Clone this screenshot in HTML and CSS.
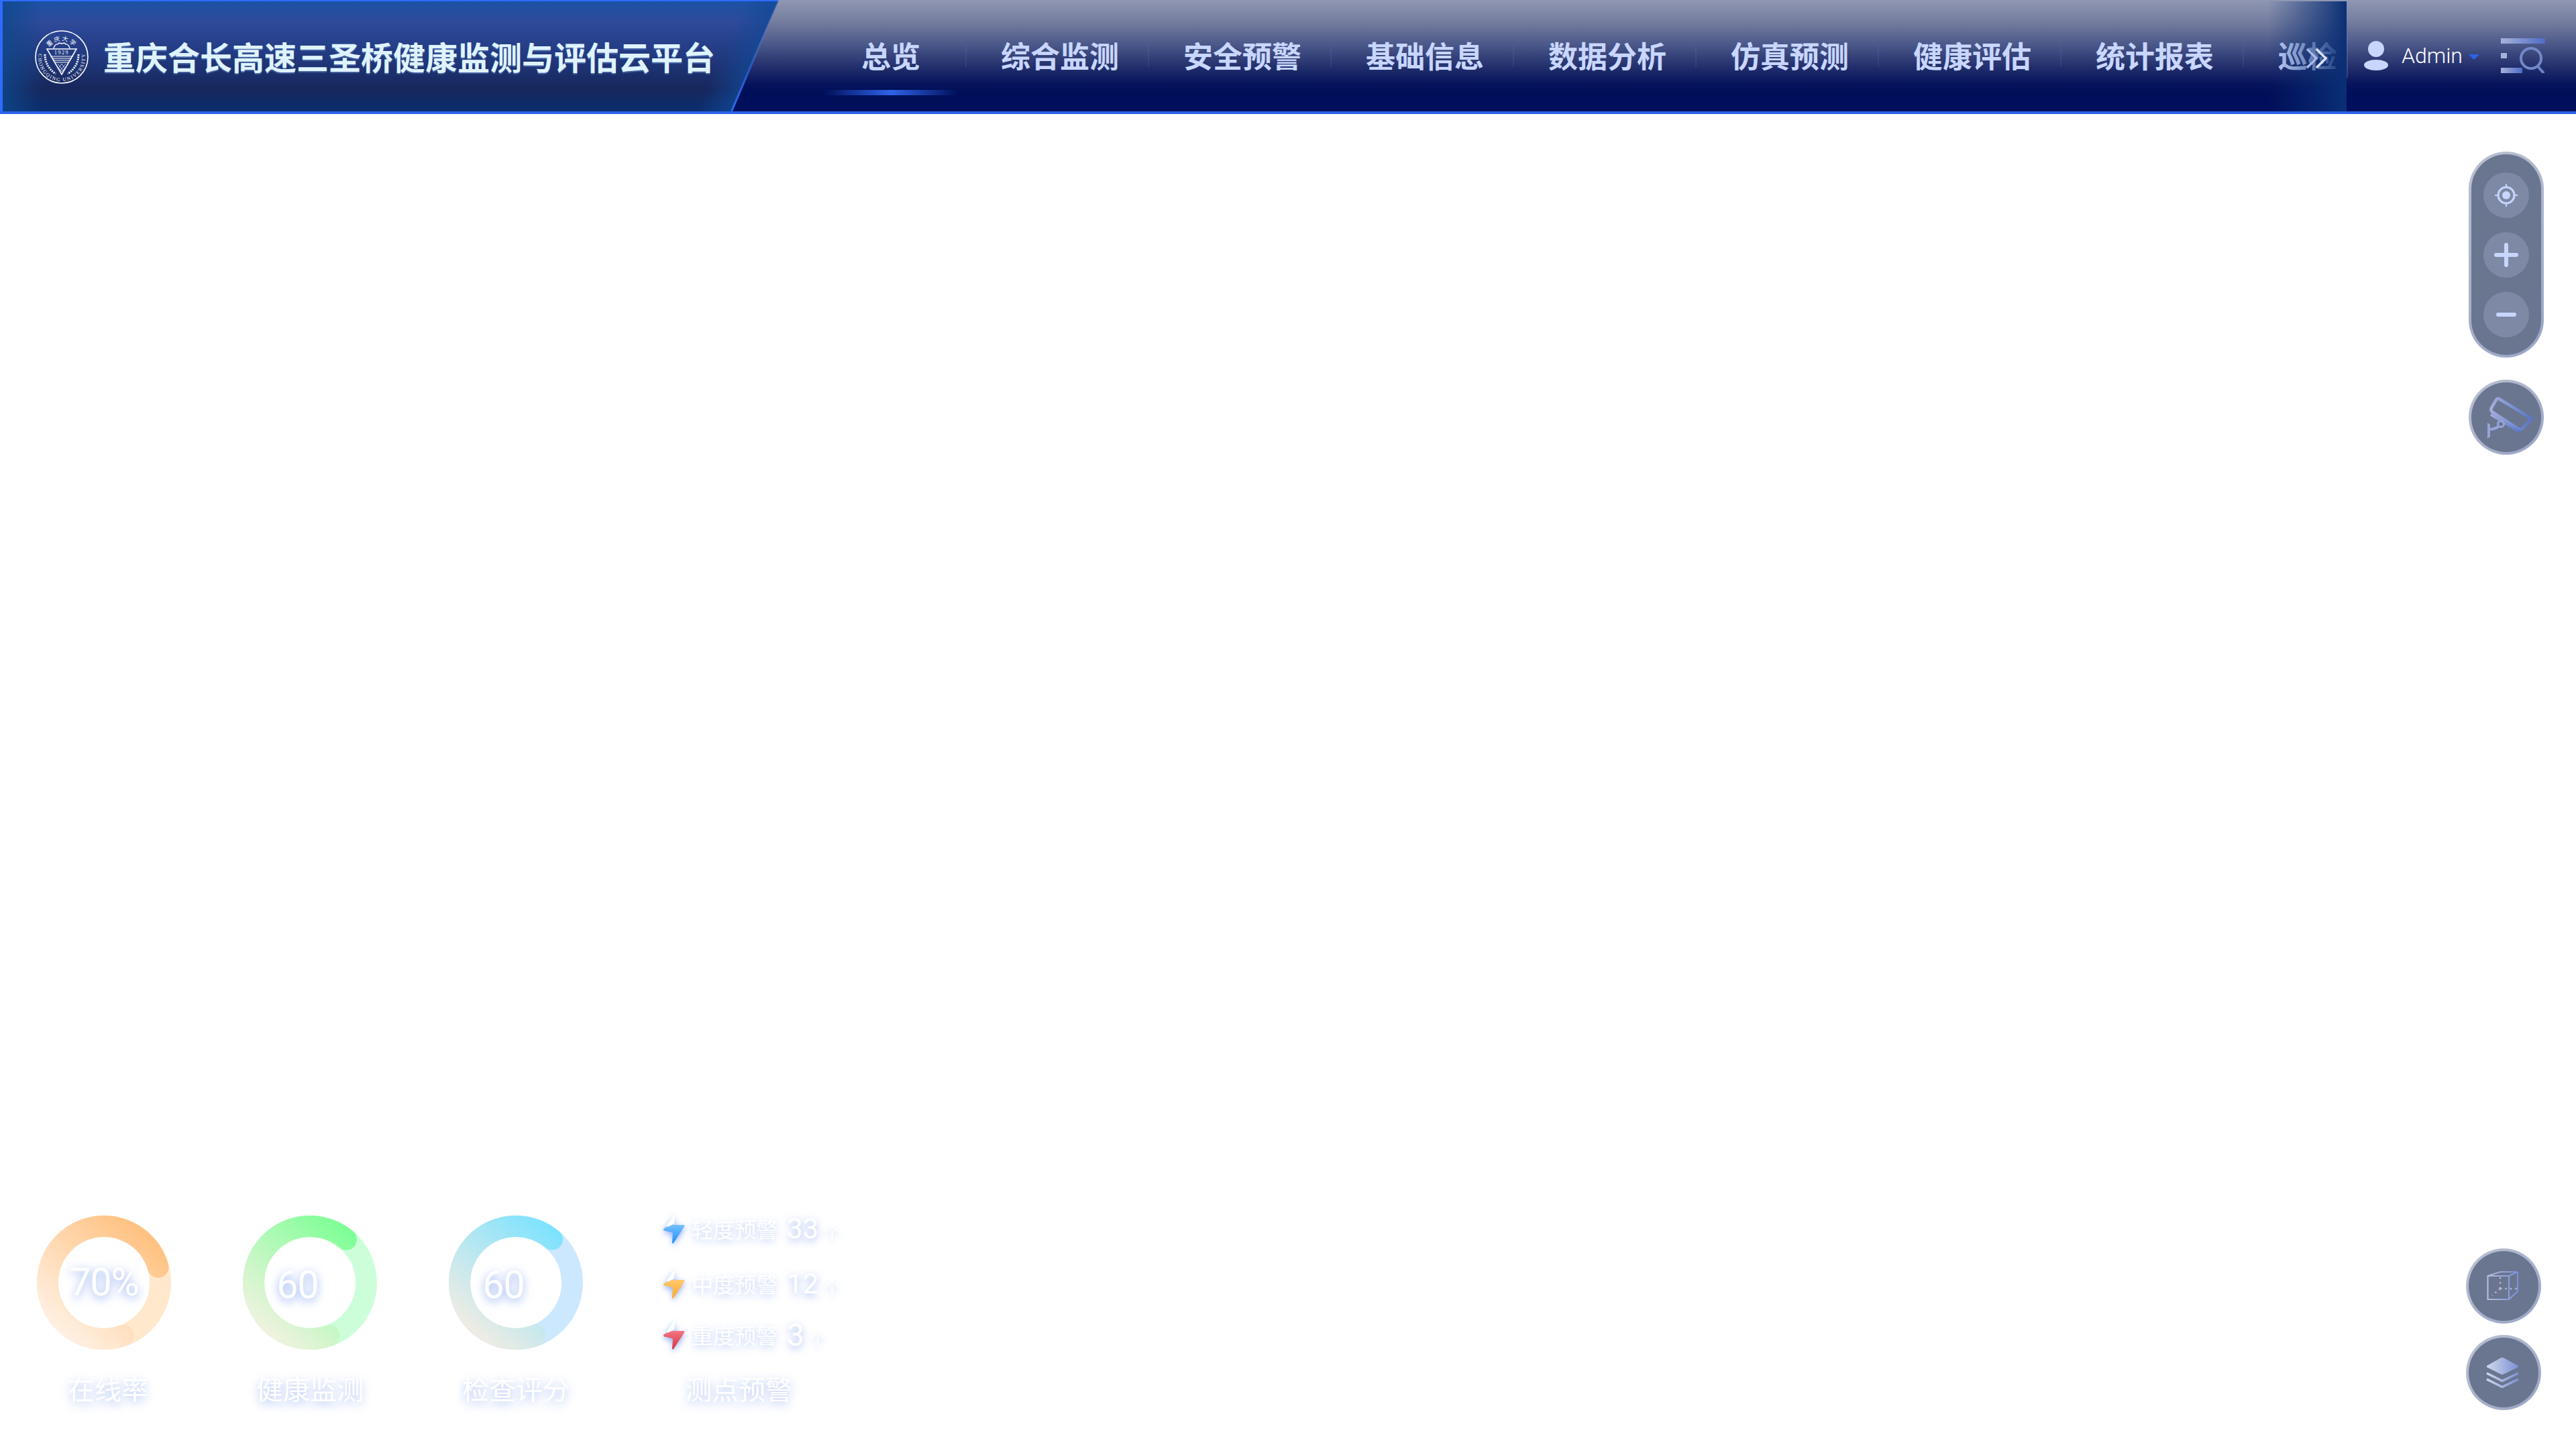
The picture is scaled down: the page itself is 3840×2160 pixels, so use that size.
FILE: index.html
```html
<!DOCTYPE html>
<html lang="zh-CN">
<head>
    <meta charset="UTF-8">
    <meta name="viewport" content="width=device-width, initial-scale=1.0">
    <title>重庆合长高速三圣桥健康监测与评估云平台</title>
    <link rel="stylesheet" href="styles.css">
</head>
<body>

    <!-- 顶部导航 -->
    <header class="header">
        <div class="title">
            <svg class="seal" viewBox="0 0 80 80" width="80" height="80">
                <defs>
                    <path id="sealTop" d="M16 40 A24 24 0 0 1 64 40"></path>
                    <path id="sealBottom" d="M6 33 A35 35 0 1 0 74 33"></path>
                </defs>
                <circle cx="40" cy="40" r="39" fill="none" stroke="#fff" stroke-width="1.6"></circle>
                <text class="seal-cn"><textPath href="#sealTop" startOffset="50%" text-anchor="middle">重庆大学</textPath></text>
                <text class="seal-en"><textPath href="#sealBottom" startOffset="50%" text-anchor="middle" textLength="122">CHONGQING UNIVERSITY</textPath></text>
                <path d="M28 27 Q30 20 34 21 L36 19 L40 20 L44 19 L46 21 Q50 20 52 27" fill="none" stroke="#fff" stroke-width="1.4"></path>
                <path d="M18 28 H62 L40 66 Z" fill="none" stroke="#fff" stroke-width="1.6"></path>
                <text class="seal-year" x="40" y="36" text-anchor="middle">1929</text>
                <path d="M23 39 H57 M25 42 H55 M27 45 H53 M29 48 H51" stroke="#fff" stroke-width="1"></path>
                <path d="M30 50 L40 62 L50 50 M34 50 L42 60 M46 50 L38 60 M40 50 L36 56 M40 50 L44 56" fill="none" stroke="#dfe8ff" stroke-width=".8"></path>
                <path d="M15 36 Q15 54 31 65" fill="none" stroke="#fff" stroke-width="3" stroke-dasharray="2 1.4"></path>
                <path d="M65 36 Q65 54 49 65" fill="none" stroke="#fff" stroke-width="3" stroke-dasharray="2 1.4"></path>
            </svg>
            <h1 class="title-text">重庆合长高速三圣桥健康监测与评估云平台</h1>
        </div>
        <svg class="title-edge" viewBox="0 0 80 166" width="80" height="166">
            <defs>
                <linearGradient id="edgeLine" x1="0" y1="0" x2="0" y2="1">
                    <stop offset="0" stop-color="#8d96b2" stop-opacity=".2"></stop>
                    <stop offset=".6" stop-color="#2a57c0"></stop>
                    <stop offset="1" stop-color="#2f66f0"></stop>
                </linearGradient>
            </defs>
            <line x1="72" y1="0" x2="1.5" y2="166" stroke="url(#edgeLine)" stroke-width="3"></line>
        </svg>

        <nav class="nav">
            <a class="nav-item active">总览</a>
            <a class="nav-item">综合监测</a>
            <a class="nav-item">安全预警</a>
            <a class="nav-item">基础信息</a>
            <a class="nav-item">数据分析</a>
            <a class="nav-item">仿真预测</a>
            <a class="nav-item">健康评估</a>
            <a class="nav-item">统计报表</a>
            <a class="nav-item">巡检</a>
            <span class="nav-fade"></span>
            <svg class="nav-more" viewBox="0 0 36 32" width="36" height="32">
                <path d="M6 2 L20 16 L6 30" fill="none" stroke="#a9b8e6" stroke-width="3.4"></path>
                <path d="M20 2 L34 16 L20 30" fill="none" stroke="#dbe2f6" stroke-width="3.4"></path>
            </svg>
        </nav>

        <div class="header-right">
            <svg class="user-icon" viewBox="0 0 36 44" width="36" height="44">
                <ellipse cx="18" cy="12" rx="12" ry="12" fill="#c8d6ff"></ellipse>
                <ellipse cx="18" cy="36" rx="18" ry="8" fill="#c8d6ff"></ellipse>
            </svg>
            <span class="user-name">Admin</span>
            <span class="user-arrow"></span>
            <svg class="search-icon" viewBox="0 0 66 52" width="66" height="52">
                <defs>
                    <linearGradient id="searchFill" x1="0" y1="0" x2="1" y2="0">
                        <stop offset="0" stop-color="#a6b2da"></stop>
                        <stop offset="1" stop-color="#4f6bc4"></stop>
                    </linearGradient>
                </defs>
                <rect x="0" y="0" width="66" height="8" fill="url(#searchFill)"></rect>
                <rect x="0" y="22" width="9" height="8" fill="#a6b2da"></rect>
                <rect x="0" y="44" width="32" height="8" fill="url(#searchFill)"></rect>
                <circle cx="45" cy="30" r="15" fill="none" stroke="#7488c8" stroke-width="4"></circle>
                <line x1="55" y1="42" x2="64" y2="52" stroke="#6f84c8" stroke-width="4"></line>
            </svg>
        </div>
    </header>

    <!-- 地图区域 -->
    <main class="map">

        <div class="map-tools">
            <div class="zoom-pill">
                <button class="zoom-btn">
                    <svg viewBox="0 0 36 36" width="36" height="36">
                        <circle cx="18" cy="18" r="12" fill="none" stroke="#c8d6ff" stroke-width="3"></circle>
                        <circle cx="18" cy="18" r="6" fill="#c8d6ff"></circle>
                        <path d="M18 1 V6 M18 30 V35 M1 18 H6 M30 18 H35" stroke="#c8d6ff" stroke-width="2"></path>
                    </svg>
                </button>
                <button class="zoom-btn">
                    <svg viewBox="0 0 36 36" width="36" height="36">
                        <path d="M3 18 H33 M18 3 V33" stroke="#c8d6ff" stroke-width="6" stroke-linecap="round"></path>
                    </svg>
                </button>
                <button class="zoom-btn">
                    <svg viewBox="0 0 36 36" width="36" height="36">
                        <path d="M6 18 H30" stroke="#c8d6ff" stroke-width="6" stroke-linecap="round"></path>
                    </svg>
                </button>
            </div>
            <button class="round-btn">
                <svg viewBox="4 4 104 104" width="104" height="104">
                    <defs>
                        <linearGradient id="camLine" x1="0" y1="0" x2="1" y2="0">
                            <stop offset="0" stop-color="#a3aeda"></stop>
                            <stop offset="1" stop-color="#5a76c8"></stop>
                        </linearGradient>
                    </defs>
                    <path d="M46 29 L94 58 L80 73 Q77 75 74 73 L35 48 Q32 45 34 42 L41 30 Q43 27 46 29 Z" fill="none" stroke="url(#camLine)" stroke-width="4.5"></path>
                    <path d="M33 52 L77 78" stroke="url(#camLine)" stroke-width="4" fill="none"></path>
                    <circle cx="48" cy="66" r="4.5" fill="none" stroke="#97a5d8" stroke-width="3"></circle>
                    <path d="M45 69 Q40 74 30 74" stroke="#97a5d8" stroke-width="4" fill="none"></path>
                    <path d="M28 64 L32 67 V85 L28 88 Z" fill="#97a5d8"></path>
                </svg>
            </button>
        </div>

        <div class="view-tools">
            <button class="round-btn">
                <svg viewBox="4 4 104 104" width="104" height="104">
                    <defs>
                        <linearGradient id="cubeLine" x1="0" y1="0" x2="1" y2="0">
                            <stop offset="0" stop-color="#b3bcdb"></stop>
                            <stop offset="1" stop-color="#7b91d4"></stop>
                        </linearGradient>
                    </defs>
                    <path d="M32.5 41 H64 V76 H32.5 Z M32.5 41 L51 35 H77 L64 41 M77 35 V64 L64 76" fill="none" stroke="url(#cubeLine)" stroke-width="2.2"></path>
                    <path d="M51 60 V38 M51 60 H76 M51 60 L39 70" fill="none" stroke="#b3bcdb" stroke-width="2.4" stroke-dasharray="2.4 5"></path>
                </svg>
            </button>
            <button class="round-btn">
                <svg viewBox="4 4 104 104" width="104" height="104">
                    <defs>
                        <linearGradient id="layerFill" x1="0" y1="0" x2="1" y2="0">
                            <stop offset="0" stop-color="#d0d6ea"></stop>
                            <stop offset="1" stop-color="#7d92d6"></stop>
                        </linearGradient>
                    </defs>
                    <path d="M31 46 L52 34 Q54 33 56 34 L78 46 L78 48 L56 58.500 Q54 59.500 52 58.500 L31 48 Z" fill="url(#layerFill)"></path>
                    <path d="M31 57 L54 68.500 L78 57 M31 66 L54 77.500 L78 66" fill="none" stroke="url(#layerFill)" stroke-width="3.600"></path>
                </svg>
            </button>
        </div>

        <!-- 左下角统计 -->
        <section class="stats">
            <div class="stat stat-online">
                <div class="donut">
                    <svg viewBox="0 0 200 200" width="200" height="200">
                        <defs>
                            <linearGradient id="arcOrange" gradientUnits="userSpaceOnUse" x1="170" y1="20" x2="30" y2="180">
                                <stop offset="0" stop-color="#ffbf7c"></stop>
                                <stop offset="1" stop-color="#fff2e6"></stop>
                            </linearGradient>
                        </defs>
                        <circle class="track" cx="100" cy="100" r="84" stroke="#ffe8cc"></circle>
                        <path class="arc" d="M128.700 178.900 A84 84 0 1 1 180.700 76.800" stroke="url(#arcOrange)"></path>
                    </svg>
                    <div class="donut-value">70%</div>
                </div>
                <div class="stat-label">在线率</div>
            </div>

            <div class="stat">
                <div class="donut">
                    <svg viewBox="0 0 200 200" width="200" height="200">
                        <defs>
                            <linearGradient id="arcGreen" gradientUnits="userSpaceOnUse" x1="170" y1="20" x2="30" y2="180">
                                <stop offset="0" stop-color="#78ff92"></stop>
                                <stop offset="1" stop-color="#f4f2e2"></stop>
                            </linearGradient>
                        </defs>
                        <circle class="track" cx="100" cy="100" r="84" stroke="#ccffd9"></circle>
                        <path class="arc" d="M128.700 178.900 A84 84 0 1 1 154 35.600" stroke="url(#arcGreen)"></path>
                    </svg>
                    <div class="donut-value donut-score">60<span class="donut-unit">分</span></div>
                </div>
                <div class="stat-label">健康监测</div>
            </div>

            <div class="stat">
                <div class="donut">
                    <svg viewBox="0 0 200 200" width="200" height="200">
                        <defs>
                            <linearGradient id="arcBlue" gradientUnits="userSpaceOnUse" x1="170" y1="20" x2="30" y2="180">
                                <stop offset="0" stop-color="#78e2ff"></stop>
                                <stop offset="1" stop-color="#f4ece2"></stop>
                            </linearGradient>
                        </defs>
                        <circle class="track" cx="100" cy="100" r="84" stroke="#cce8ff"></circle>
                        <path class="arc" d="M128.700 178.900 A84 84 0 1 1 154 35.600" stroke="url(#arcBlue)"></path>
                    </svg>
                    <div class="donut-value donut-score">60<span class="donut-unit">分</span></div>
                </div>
                <div class="stat-label">检查评分</div>
            </div>

            <div class="stat stat-alerts">
                <div class="alert-rows">
                    <div class="alert-row">
                        <svg class="bolt" viewBox="0 0 32 44" width="32" height="44">
                            <defs>
                                <linearGradient id="boltBlue" x1="0" y1="0" x2="0" y2="1">
                                    <stop offset="0" stop-color="#74c2ff"></stop>
                                    <stop offset="1" stop-color="#1c8cff"></stop>
                                </linearGradient>
                            </defs>
                            <path d="M1 21 L7 18 Q11 16 15 16 L30 16 Q32 16 31 18.500 L15 43 Q13 44.500 13 42 L14 29 Q14 27 12 26.700 L1 24.500 Q-1 23 1 21 Z" fill="url(#boltBlue)"></path>
                            <path d="M17 0 L4.500 17 Q5 19 7 18.400 L16 14 Z" fill="#fff"></path>
                        </svg>
                        <span class="alert-name">轻度预警</span>
                        <span class="alert-num">33</span>
                        <span class="alert-unit">个</span>
                    </div>
                    <div class="alert-row">
                        <svg class="bolt" viewBox="0 0 32 44" width="32" height="44">
                            <defs>
                                <linearGradient id="boltOrange" x1="0" y1="0" x2="0" y2="1">
                                    <stop offset="0" stop-color="#ffc86e"></stop>
                                    <stop offset="1" stop-color="#ffa726"></stop>
                                </linearGradient>
                            </defs>
                            <path d="M1 21 L7 18 Q11 16 15 16 L30 16 Q32 16 31 18.500 L15 43 Q13 44.500 13 42 L14 29 Q14 27 12 26.700 L1 24.500 Q-1 23 1 21 Z" fill="url(#boltOrange)"></path>
                            <path d="M17 0 L4.500 17 Q5 19 7 18.400 L16 14 Z" fill="#fff"></path>
                        </svg>
                        <span class="alert-name">中度预警</span>
                        <span class="alert-num">12</span>
                        <span class="alert-unit">个</span>
                    </div>
                    <div class="alert-row">
                        <svg class="bolt" viewBox="0 0 32 44" width="32" height="44">
                            <defs>
                                <linearGradient id="boltRed" x1="0" y1="0" x2="0" y2="1">
                                    <stop offset="0" stop-color="#f57682"></stop>
                                    <stop offset="1" stop-color="#d62f3c"></stop>
                                </linearGradient>
                            </defs>
                            <path d="M1 21 L7 18 Q11 16 15 16 L30 16 Q32 16 31 18.500 L15 43 Q13 44.500 13 42 L14 29 Q14 27 12 26.700 L1 24.500 Q-1 23 1 21 Z" fill="url(#boltRed)"></path>
                            <path d="M17 0 L4.500 17 Q5 19 7 18.400 L16 14 Z" fill="#fff"></path>
                        </svg>
                        <span class="alert-name">重度预警</span>
                        <span class="alert-num alert-num-big">3</span>
                        <span class="alert-unit">个</span>
                    </div>
                </div>
                <div class="stat-label">测点预警</div>
            </div>
        </section>
    </main>

</body>
</html>
```

FILE: styles.css
```css
* { box-sizing: border-box; }
html, body { margin: 0; padding: 0; }
body { width: 3840px; height: 2160px; overflow: hidden; background: #fff; display: flex; flex-direction: column; font-family: "Noto Sans CJK SC", "Noto Sans", sans-serif; }
button { padding: 0; font: inherit; cursor: pointer; }

/* 顶部导航 */
.header { position: relative; display: flex; flex: none; height: 170px; border-bottom: 4px solid #2c62e8; background: linear-gradient(180deg, #8f97b3 0, #747d9f 33px, #4a5788 67px, #222f6c 100px, #06145c 125px, #000f59 135px, #000f59 100%); }

.title { flex: none; display: flex; align-items: center; width: 1161px; padding-left: 48px; border-left: 4px solid #2f6bff; border-top: 2px solid #2f6bff; clip-path: polygon(0 0, 100% 0, 1090px 100%, 0 100%); background: linear-gradient(113deg, transparent 90%, rgba(18, 72, 150, .75) 94.300%), linear-gradient(90deg, rgba(14, 72, 140, .8), transparent 60px), linear-gradient(180deg, #1b52a4 0, #2e4a9a 30px, #223a80 80px, #17275c 130px, #0a2e6e 164px); }
.seal { flex: none; margin-top: 2px; }
.seal-cn { font-size: 9px; fill: #fff; letter-spacing: 2px; }
.seal-en { font-family: "Liberation Serif", serif; font-size: 7.500px; fill: #fff; }
.seal-year { font-family: "Liberation Serif", serif; font-size: 8px; fill: #fff; letter-spacing: 1.500px; }
.title-text { margin: -3px 0 0 22px; font-size: 48px; line-height: 60px; font-weight: 700; color: #dff3ff; white-space: nowrap; text-shadow: 0 2px 1px rgba(120, 160, 220, .45); }
.title-edge { position: absolute; left: 1089px; top: 0; }

.nav { position: relative; flex: none; display: flex; width: 2270px; height: 166px; margin-left: 67px; overflow: hidden; }
.nav-item { position: relative; flex: none; display: flex; align-items: center; width: 272px; height: 164px; padding-left: 51px; font-size: 44px; font-weight: 700; color: #c8d6ff; white-space: nowrap; }
.nav-item::before { content: ""; position: absolute; right: 0; top: 68px; width: 2px; height: 32px; background: rgba(110, 125, 185, .16); }
.nav-item:last-of-type::before { display: none; }
.nav-item.active { width: 213px; padding-left: 56px; }
.nav-item.active::after { content: ""; position: absolute; left: 0; top: 134px; width: 200px; height: 8px; background: linear-gradient(90deg, transparent, #2f62e8 50%, transparent); }
.nav-fade { position: absolute; right: 0; top: 2px; bottom: 0; width: 123px; background: linear-gradient(90deg, rgba(10, 47, 117, 0) 5%, rgba(10, 47, 117, .7) 75%, #0a2f75); }
.nav-more { position: absolute; right: 29px; top: 71px; }

.header-right { position: relative; flex: 1; display: flex; align-items: center; padding-left: 26px; }
.header-right::before { content: ""; position: absolute; left: 0; top: 52px; width: 2px; height: 64px; background: rgba(110, 125, 185, .35); }
.user-icon { flex: none; }
.user-name { margin-left: 20px; font-family: Roboto, sans-serif; font-size: 32px; font-weight: 300; color: #fff; }
.user-arrow { width: 0; height: 0; margin: 3px 0 0 9px; border-left: 8px solid transparent; border-right: 8px solid transparent; border-top: 8px solid #2c62e8; }
.search-icon { flex: none; margin-left: 32px; }

/* 地图区域 */
.map { position: relative; flex: 1; }

.map-tools { position: absolute; right: 48px; top: 56px; display: flex; flex-direction: column; gap: 33px; }
.view-tools { position: absolute; right: 52px; bottom: 58px; display: flex; flex-direction: column; gap: 17px; }

.zoom-pill { display: flex; flex-direction: column; align-items: center; justify-content: center; gap: 21px; width: 112px; height: 307px; border: 4px solid transparent; border-radius: 56px; background: linear-gradient(#6a7590, #6a7590) padding-box, linear-gradient(135deg, #bcc2d1, #98a3c6) border-box; }
.zoom-btn { display: flex; align-items: center; justify-content: center; width: 68px; height: 68px; border: 0; border-radius: 50%; background: #7e89a5; }
.round-btn { display: flex; align-items: center; justify-content: center; width: 112px; height: 112px; border: 4px solid transparent; border-radius: 50%; background: linear-gradient(#6a7590, #6a7590) padding-box, linear-gradient(135deg, #bcc2d1, #98a3c6) border-box; }

/* 左下角统计 */
.stats { position: absolute; left: 55px; top: 1642px; display: flex; gap: 107px; color: #fff; }
.stat { flex: none; width: 200px; }
.donut { position: relative; width: 200px; height: 200px; }
.donut svg { display: block; }
.track { fill: none; stroke-width: 32; }
.arc { fill: none; stroke-width: 32; stroke-linecap: round; }
.donut-value { position: absolute; left: 0; right: 0; top: 68px; display: flex; align-items: baseline; justify-content: center; font-family: Roboto, sans-serif; font-size: 57px; line-height: 64px; letter-spacing: -1px; text-shadow: 0 4px 14px rgba(60, 110, 230, .6); }
.donut-score { top: 72px; }
.donut-unit { margin-left: 6px; font-family: "Noto Sans CJK SC", sans-serif; font-size: 32px; text-shadow: none; }
.stat-label { margin-top: 33px; font-size: 40px; line-height: 48px; text-align: center; white-space: nowrap; text-shadow: 0 5px 14px rgba(60, 110, 230, .42); }
.stat-online .stat-label { padding-left: 12px; }

.stat-alerts { width: 260px; margin-left: 13px; }
.alert-rows { display: grid; grid-template-rows: 82px 76px 44px; margin-top: -2px; }
.alert-row { display: flex; align-items: flex-start; height: 44px; white-space: nowrap; }
.bolt { flex: none; overflow: visible; filter: drop-shadow(0 3px 5px rgba(50, 100, 230, .55)); }
.alert-name { margin: -1px 0 0 10px; font-size: 32px; line-height: 44px; text-shadow: 0 4px 11px rgba(60, 110, 230, .34); }
.alert-num { margin-left: 14px; font-family: Roboto, sans-serif; font-size: 42px; line-height: 44px; text-shadow: 0 4px 12px rgba(60, 110, 230, .5); }
.alert-num-big { font-size: 46px; }
.alert-unit { margin: 8px 0 0 8px; font-size: 24px; line-height: 36px; text-shadow: 0 4px 10px rgba(60, 110, 230, .28); }
.stat-alerts .stat-label { padding-right: 36px; }
```
